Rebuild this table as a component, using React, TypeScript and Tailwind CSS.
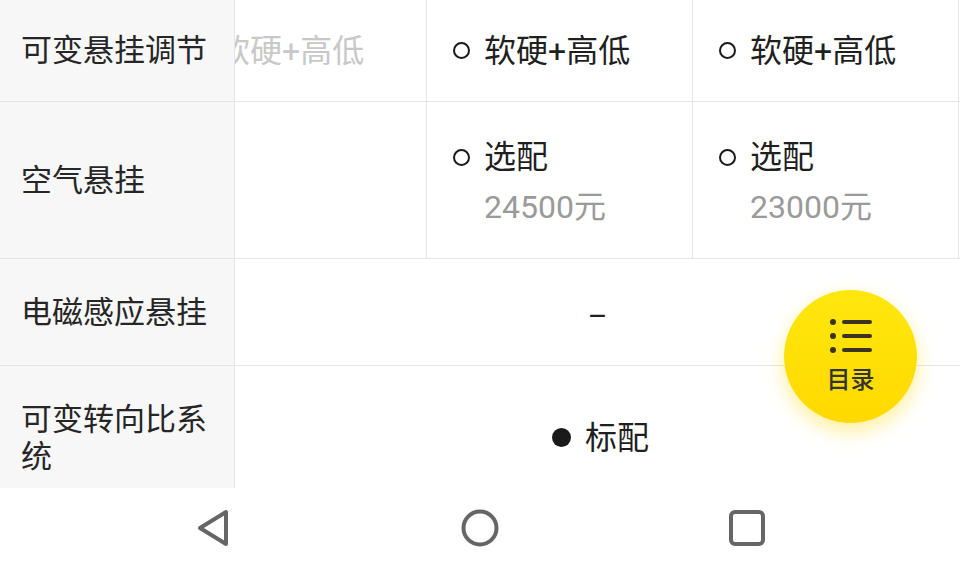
import React from "react"

const font = { fontFamily: "Roboto, 'Noto Sans CJK SC', sans-serif" }

function Row({ label, h, children }: { label: React.ReactNode; h: string; children?: React.ReactNode }) {
    return (
        <div className={`flex shrink-0 border-b border-[#e5e5e5] ${h}`}>
            <div className="w-[235px] shrink-0 bg-[#f7f7f7] border-r border-[#e5e5e5] flex items-center pl-[21px] pr-[4px] text-[31px] leading-[37px] text-[#262626]">
                {label}
            </div>
            <div className="flex-1 overflow-hidden">{children}</div>
        </div>
    )
}

function Ring({ faded }: { faded?: boolean }) {
    return <span className={`w-[17px] h-[17px] rounded-full border-[2.5px] shrink-0 ${faded ? "border-[#cfcfcf]" : "border-[#1a1a1a]"}`} />
}

function Opt({ text, price, faded, top }: { text: string; price?: string; faded?: boolean; top?: boolean }) {
    return (
        <div className={`w-[266px] shrink-0 h-full border-r border-[#e5e5e5] pl-[26px] flex flex-col ${top ? "pt-[30px]" : "justify-center"}`}>
            <div className="flex items-center gap-[14px] h-[50px]">
                <Ring faded={faded} />
                <span className={`text-[32px] ${faded ? "text-[#c8c8c8]" : "text-[#1f1f1f]"}`}>{text}</span>
            </div>
            {price && <div className="pl-[31px] text-[32px] leading-[50px] text-[#9a9a9a]">{price}</div>}
        </div>
    )
}

export default function App() {
    return (
        <div className="relative w-[960px] h-[568px] overflow-hidden bg-white flex flex-col" style={font}>
            <div className="h-[488px] shrink-0 overflow-hidden flex flex-col">
                <Row label="可变悬挂调节" h="h-[102px]">
                    <div className="flex h-full ml-[-74px]">
                        <Opt text="软硬+高低" faded />
                        <Opt text="软硬+高低" />
                        <Opt text="软硬+高低" />
                    </div>
                </Row>
                <Row label="空气悬挂" h="h-[157px]">
                    <div className="flex h-full ml-[-74px]">
                        <div className="w-[266px] shrink-0 h-full border-r border-[#e5e5e5]" />
                        <Opt text="选配" price="24500元" top />
                        <Opt text="选配" price="23000元" top />
                    </div>
                </Row>
                <Row label="电磁感应悬挂" h="h-[107px]">
                    <div className="h-full flex items-center justify-center pt-[6px] text-[30px] text-[#222]">–</div>
                </Row>
                <Row label={<span>可变转向比系统</span>} h="h-[144px]">
                    <div className="h-full flex items-center justify-center gap-[14px] pl-[6px]">
                        <span className="w-[19px] h-[19px] rounded-full bg-[#1a1a1a]" />
                        <span className="text-[32px] text-[#1f1f1f]">标配</span>
                    </div>
                </Row>
            </div>

            <nav className="h-[80px] flex items-center justify-center gap-[230px] bg-white">
                <svg width="36" height="38" viewBox="0 0 36 38" fill="none" stroke="#666" strokeWidth="4" strokeLinejoin="round">
                    <path d="M31 3 L31 35 L5 19 Z" />
                </svg>
                <svg width="38" height="38" viewBox="0 0 38 38" fill="none" stroke="#666" strokeWidth="4">
                    <circle cx="19" cy="19" r="16.5" />
                </svg>
                <svg width="36" height="36" viewBox="0 0 36 36" fill="none" stroke="#666" strokeWidth="4">
                    <rect x="2" y="2" width="32" height="32" rx="4" />
                </svg>
            </nav>

            <button className="absolute left-[784px] top-[290px] w-[133px] h-[133px] rounded-full bg-linear-to-b from-[#ffe70d] to-[#ffd900] shadow-[0_8px_20px_rgba(255,215,0,0.4)] flex flex-col items-center justify-center">
                <svg width="44" height="36" viewBox="0 0 44 36" fill="none">
                    <circle cx="4" cy="4" r="3" fill="#3a3320" />
                    <circle cx="4" cy="18" r="3" fill="#3a3320" />
                    <circle cx="4" cy="32" r="3" fill="#3a3320" />
                    <path d="M15 4 H41 M15 18 H41 M15 32 H41" stroke="#3a3320" strokeWidth="4" strokeLinecap="round" />
                </svg>
                <span className="mt-[11px] text-[24px] leading-[30px] text-[#333] font-medium">目录</span>
            </button>
        </div>
    )
}
